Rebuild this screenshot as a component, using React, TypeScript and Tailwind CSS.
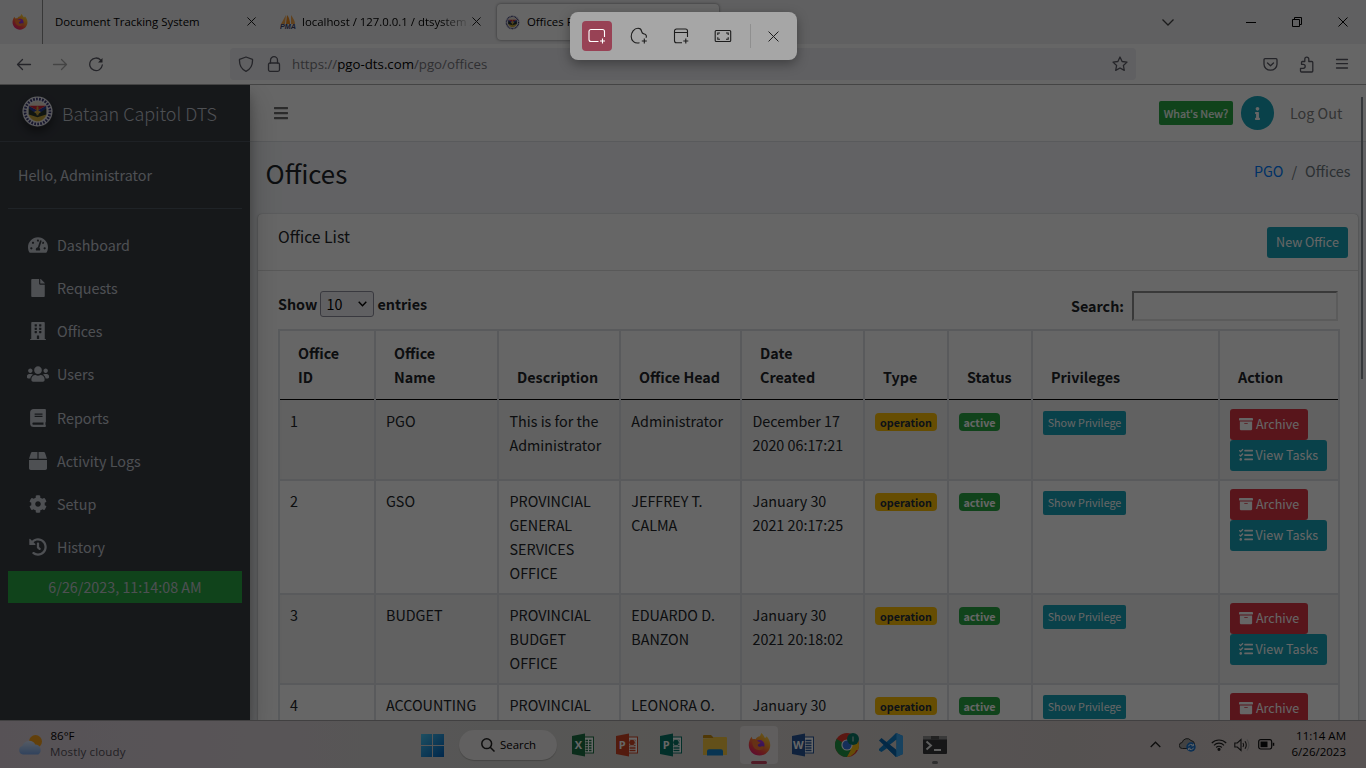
import type { ReactNode } from "react";
import {
  FaArchive, FaBars, FaBook, FaBox, FaBuilding, FaCog, FaFile, FaHistory,
  FaInfo, FaTachometerAlt, FaTasks, FaUsers,
} from "react-icons/fa";

function FirefoxLogo({ size, id }: { size: number; id: string }) {
  return (
    <svg width={size} height={size} viewBox="0 0 24 24" className="shrink-0">
      <defs>
        <linearGradient id={id + "a"} x1="0.85" y1="0" x2="0.2" y2="1">
          <stop offset="0" stopColor="#ffe545" />
          <stop offset="0.4" stopColor="#ff9a2b" />
          <stop offset="0.7" stopColor="#ff4545" />
          <stop offset="1" stopColor="#e8187f" />
        </linearGradient>
        <linearGradient id={id + "b"} x1="0.7" y1="0" x2="0.3" y2="1">
          <stop offset="0" stopColor="#b833e1" />
          <stop offset="1" stopColor="#5b3bd8" />
        </linearGradient>
      </defs>
      <path d="M12 23.500C5.500 23.500.8 18.500.8 12.500c0-3.500 1.300-6.500 3.200-8.500 0 1 .4 2 1 2.600 1-.4 2-.4 3-.1 1-2 2.500-3 4.300-3.200 .9-1 1-2 1.500-3.300 2 1.500 3 3.500 3.700 5 1.200 0 1.800-.8 1.800-1.600 2.300 2.400 3.900 5.600 3.900 9.100 0 6-4.700 11-11.200 11z" fill={`url(#${id}a)`} />
      <circle cx="12" cy="12.500" r="5.200" fill={`url(#${id}b)`} />
      <path d="M4.500 8.500c2-1.500 4.500-1.500 6 .3 1.200.4 2.300.3 2.600 1.200 0 1-1.800 1.400-2.600 2-.9 1.600 1 3 3 2.200 1.800-.6 2.800-.6 3.600.3-1.200 3-4.600 4.200-7.800 3-3.400-1.300-5.200-5-4.800-9z" fill="#ff7a35" />
    </svg>
  );
}

function Seal({ size }: { size: number }) {
  return (
    <svg width={size} height={size} viewBox="0 0 32 32" className="shrink-0">
      <circle cx="16" cy="16" r="15.500" fill="#e4e4ec" />
      <circle cx="16" cy="16" r="12.900" fill="none" stroke="#34346e" strokeWidth="2.700" strokeDasharray="1.800 1.300" />
      <circle cx="16" cy="16" r="10.500" fill="#e8dfd0" />
      <path d="M7 10l9 5-9 4z" fill="#2b3f9c" />
      <path d="M7 10h9v5z" fill="#d32436" />
      <path d="M25 10l-9 5v-5z" fill="#d32436" />
      <path d="M25 10v9l-9-4z" fill="#253d94" />
      <path d="M7 19l9-4 9 4c-1 4-5 7-9 7s-8-3-9-7z" fill="#c9a93d" />
      <path d="M7 13l9 6 9-6v6l-9 3-9-3z" fill="#27362c" />
      <path d="M15 11h2v9h-2z" fill="#c9a23d" />
    </svg>
  );
}

function PmaLogo() {
  return (
    <svg width="17" height="16" viewBox="0 0 17 16" className="shrink-0">
      <path d="M6 1L5 10H1z" fill="#f3a64b" />
      <path d="M7 1c2 2 3 6 3 9H6z" fill="#f08c1e" />
      <path d="M11 1c2 3 4 6 4 9h-4z" fill="#f3a64b" />
      <text x="0" y="15.300" fontSize="6.500" fontWeight="700" fontStyle="italic" fill="#3f4167" fontFamily="Liberation Sans, sans-serif" textLength="16" lengthAdjust="spacingAndGlyphs">PMA</text>
    </svg>
  );
}

function Cross({ size, color = "#1a1a1a", w = 1 }: { size: number; color?: string; w?: number }) {
  return (
    <svg width={size} height={size} viewBox="0 0 10 10" fill="none" stroke={color} strokeWidth={w} className="shrink-0">
      <path d="M.5.5l9 9M9.500.5l-9 9" />
    </svg>
  );
}

function TabStrip() {
  return (
    <div className="flex h-11 shrink-0 items-center bg-[#f0f0f2] font-['Open_Sans',sans-serif] text-[11.4px] text-black">
      <div className="flex h-full w-[43px] items-center border-r border-[#8d8d8d] pl-3">
        <FirefoxLogo size={16} id="tab" />
      </div>
      <div className="flex w-[222px] items-center pl-3">
        <span className="w-[192px] whitespace-nowrap">Document Tracking System</span>
        <Cross size={9} w={1.1} />
      </div>
      <div className="flex w-[232px] items-center pl-[15px]">
        <PmaLogo />
        <span className="ml-[5px] w-[170px] overflow-hidden whitespace-nowrap [mask-image:linear-gradient(to_right,black_82%,transparent)]">localhost / 127.0.0.1 / dtsystem /</span>
        <Cross size={9} w={1.1} />
      </div>
      <div className="flex h-9 w-[222px] items-center rounded bg-white pl-2 shadow-[0_0_3px_rgba(0,0,0,.5)]">
        <Seal size={15} />
        <span className="ml-[7px] whitespace-nowrap">Offices Page</span>
      </div>
      <div className="ml-auto flex items-center pr-[18px]">
        <svg width="12" height="7" viewBox="0 0 12 7" fill="none" stroke="#444" strokeWidth="1.300"><path d="M.5.5L6 6 11.500.5" /></svg>
        <div className="ml-[72px] h-px w-[10px] bg-black" />
        <svg width="10" height="10" viewBox="0 0 10 10" fill="none" stroke="#000" className="ml-9"><path d="M.5 2.500h7v7h-7zM2.500 2.500v-2h7v7h-2" /></svg>
        <div className="ml-9"><Cross size={10} color="#000" /></div>
      </div>
    </div>
  );
}

function Toolbar() {
  const s = { fill: "none", stroke: "#5b5b66", strokeWidth: 1.3, strokeLinecap: "round", strokeLinejoin: "round" } as const;
  return (
    <div className="flex h-[41px] shrink-0 items-center border-b border-[#aaa] bg-white pr-[17px] pl-4">
      <svg width="16" height="16" viewBox="0 0 16 16" {...s}><path d="M14.500 8.500H1.500M6.500 3.500l-5 5 5 5" /></svg>
      <svg width="16" height="16" viewBox="0 0 16 16" {...s} stroke="#aaa" className="ml-5"><path d="M1.500 8.500h13M9.500 3.500l5 5-5 5" /></svg>
      <svg width="16" height="16" viewBox="0 0 16 16" {...s} className="ml-5"><path d="M12.800 4.200A6.300 6.300 0 1 0 14.300 9" /><path d="M14.500 2v4.500H10z" fill="#4d4d55" stroke="none" /></svg>
      <div className="ml-[126px] flex h-8 w-[906px] items-center rounded bg-[#f0f0f4] pr-2 pl-2">
        <svg width="16" height="16" viewBox="0 0 16 16" {...s}><path d="M8 1l6.500 2.300c.3 5-1.500 9.700-6.500 12-5-2.300-6.800-7-6.500-12z" /></svg>
        <svg width="14" height="16" viewBox="0 0 14 16" {...s} className="ml-[13px]"><rect x="1.500" y="7" width="11" height="8.300" rx="1.500" /><path d="M3.500 7V4.200a3.500 3.500 0 0 1 7 0V7" /></svg>
        <span className="ml-[11px] pt-0.5 font-['Open_Sans',sans-serif] text-[13.250px] whitespace-nowrap text-[#77777d]">https://<span className="text-black">pgo-dts.com</span>/pgo/offices</span>
        <svg width="16" height="16" viewBox="0 0 16 16" {...s} className="ml-auto"><path d="M8 1l2.100 4.500 4.900.6-3.600 3.400.9 4.900L8 12l-4.300 2.400.9-4.900L1 6.100l4.900-.6z" /></svg>
      </div>
      <svg width="15" height="15" viewBox="0 0 15 15" {...s} className="ml-[126.500px]"><path d="M2 1.700h11a1 1 0 0 1 1 1v4.500a6.500 6 0 0 1-13 0V2.700a1 1 0 0 1 1-1zM4.500 6l3 2.800 3-2.800" /></svg>
      <svg width="16" height="17" viewBox="0 0 16 17" {...s} className="ml-[21px]"><path d="M2.500 16h10.300a1 1 0 0 0 1-1V6.500a1 1 0 0 0-1-1H9.800V3.200a2 2 0 0 0-4 0v2.300H3.500a1 1 0 0 0-1 1v1.800h1.700a2 2 0 0 1 0 4H1.500V15a1 1 0 0 0 1 1z" /></svg>
      <svg width="14" height="12" viewBox="0 0 14 12" {...s} className="ml-auto"><path d="M1.500 1.500h11M1.500 5.700h11M1.500 10h11" /></svg>
    </div>
  );
}

const navItems = [
  { label: "Dashboard", Icon: FaTachometerAlt, size: 20 },
  { label: "Requests", Icon: FaFile, size: 18 },
  { label: "Offices", Icon: FaBuilding, size: 18 },
  { label: "Users", Icon: FaUsers, size: 22 },
  { label: "Reports", Icon: FaBook, size: 18 },
  { label: "Activity Logs", Icon: FaBox, size: 18 },
  { label: "Setup", Icon: FaCog, size: 18 },
  { label: "History", Icon: FaHistory, size: 18 },
];

function Sidebar() {
  return (
    <aside className="z-10 flex w-[250px] shrink-0 flex-col bg-[#383c43] text-[#c2c7d0] shadow-[0_14px_28px_rgba(0,0,0,.25),0_10px_10px_rgba(0,0,0,.22)]">
      <div className="flex h-[57px] items-center border-b border-[#4b545c] pl-[22px]">
        <div className="-mt-1 rounded-full shadow-[0_5px_8px_rgba(0,0,0,.4)]"><Seal size={31} /></div>
        <span className="ml-[9px] pb-px text-[17.950px] leading-6 font-light whitespace-nowrap">Bataan Capitol DTS</span>
      </div>
      <div className="mx-2 h-[67px] border-b border-[#4f5962] pt-[21px] pl-[10px] text-[14.330px] leading-6">Hello, Administrator</div>
      <nav className="mt-[14.400px] mb-[2.600px] flex flex-col">
        {navItems.map(({ label, Icon, size }) => (
          <div key={label} className="flex h-[43.150px] items-center pl-6">
            <span className="flex w-7 justify-center"><Icon size={size} /></span>
            <span className="ml-[5px] text-[14.330px] leading-6">{label}</span>
          </div>
        ))}
      </nav>
      <div className="mx-2 h-8 bg-[#28a745] text-center text-[14.330px] leading-8">6/26/2023, 11:14:08 AM</div>
    </aside>
  );
}

const columns = ["Office ID", "Office Name", "Description", "Office Head", "Date Created", "Type", "Status", "Privileges", "Action"];
const offices = [
  { id: "1", name: "PGO", desc: "This is for the Administrator", head: "Administrator", date: ["December 17", "2020 06:17:21"], h: "h-[79px] pt-[9px] bg-[#f2f2f2]" },
  { id: "2", name: "GSO", desc: "PROVINCIAL GENERAL SERVICES OFFICE", head: "JEFFREY T. CALMA", date: ["January 30", "2021 20:17:25"], h: "h-[114px] border-t-2 pt-[8px]" },
  { id: "3", name: "BUDGET", desc: "PROVINCIAL BUDGET OFFICE", head: "EDUARDO D. BANZON", date: ["January 30", "2021 20:18:02"], h: "h-[90px] border-t-2 pt-[8px] bg-[#f2f2f2]" },
  { id: "4", name: "ACCOUNTING", desc: "PROVINCIAL", head: "LEONORA O.", date: ["January 30", ""], h: "h-[90px] border-t-2 pt-[8px]" },
];
const gridCols = "grid grid-cols-[96px_123px_122px_121px_123px_84px_84px_187px_120px]";

function Cell({ className, children }: { className: string; children: ReactNode }) {
  return <div className={"border-l-2 border-[#dee2e6] pl-[10px] " + className}>{children}</div>;
}

function OfficeTable() {
  return (
    <div className="w-[1062px] border-t-2 border-r-2 border-[#dee2e6] text-[14.330px] leading-6 text-[#212529]">
      <div className={gridCols + " h-[69px]"}>
        {columns.map((c, i) => (
          <div key={c} className="border-l-2 border-[#dee2e6]">
            <div className="flex h-full items-end border-b border-black pb-[10px] pl-[18px] font-bold">
              <span className={i < 2 || i === 4 ? "w-14" : "whitespace-nowrap"}>{c}</span>
            </div>
          </div>
        ))}
      </div>
      {offices.map((o) => (
        <div key={o.id} className={gridCols}>
          <Cell className={o.h}>{o.id}</Cell>
          <Cell className={o.h}>{o.name}</Cell>
          <Cell className={o.h}><div className="w-[100px] pl-[0.5px]">{o.desc}</div></Cell>
          <Cell className={o.h}><div className="w-[100px] pl-[0.300px]">{o.head}</div></Cell>
          <Cell className={o.h + " whitespace-nowrap"}><div className="pl-[0.5px]">{o.date[0]}<br />{o.date[1]}</div></Cell>
          <Cell className={o.h}>
            <div className="mt-1 h-[18px] w-[62px] rounded bg-[#ffc107] pt-px text-center text-[10.750px] leading-[18px] font-bold text-[#1f2d3d]">operation</div>
          </Cell>
          <Cell className={o.h}>
            <div className="mt-1 h-[18px] w-[41px] rounded bg-[#28a745] pt-px text-center text-[10.750px] leading-[18px] font-bold text-white">active</div>
          </Cell>
          <Cell className={o.h}>
            <div className="mt-0.5 h-6 w-[83px] rounded-[2px] bg-[#17a2b8] text-center text-[10.750px] leading-6 whitespace-nowrap text-white">Show Privilege</div>
          </Cell>
          <Cell className={o.h}>
            <div className="flex h-[31px] w-[78px] items-center gap-[3px] rounded-[3px] bg-[#dc3545] pb-0.5 pl-[9px] text-[12.540px] text-white"><FaArchive size={14} />Archive</div>
            <div className="flex h-[31px] w-[97px] items-center gap-[2.500px] rounded-[3px] bg-[#17a2b8] pb-0.5 pl-[9px] text-[12.540px] whitespace-nowrap text-white"><FaTasks size={14} />View Tasks</div>
          </Cell>
        </div>
      ))}
    </div>
  );
}

function Main() {
  return (
    <main className="relative flex grow flex-col overflow-hidden bg-[#f4f6f9] text-[14.330px] leading-6 text-[#212529]">
      <header className="flex h-[57px] shrink-0 items-center border-b border-[#dee2e6] bg-white pr-6 pl-[23px]">
        <FaBars size={16} color="#6c6c6c" />
        <div className="ml-auto h-6 w-[74px] rounded-[2px] bg-[#28a745] text-center text-[10.900px] leading-[25px] whitespace-nowrap text-white [-webkit-text-stroke:0.2px_white]">What's New?</div>
        <div className="ml-2 flex h-[34px] w-[33px] items-center justify-center rounded-full bg-[#17a2b8] text-white"><FaInfo size={13} /></div>
        <span className="ml-4 w-[52px] pb-px whitespace-nowrap text-[#7f7f7f]">Log Out</span>
      </header>
      <div className="flex h-[72px] shrink-0 justify-between pr-[15.500px] pl-[15.500px]">
        <h1 className="pt-[13px] text-[25.800px] leading-9">Offices</h1>
        <div className="flex gap-2 pt-[17px]"><span className="text-[#007bff]">PGO</span><span className="text-[#6c757d]">/</span><span className="text-[#6c757d]">Offices</span></div>
      </div>
      <section className="mx-2 flex grow flex-col rounded-t bg-white shadow-[0_0_1px_rgba(0,0,0,.3),0_1px_3px_rgba(0,0,0,.25)]">
        <div className="flex h-[57px] shrink-0 justify-between border-b border-[#dedede] pt-[13px] pr-[10px] pl-5">
          <h3 className="-mt-0.5 text-[15.760px]">Office List</h3>
          <button className="h-[31px] w-[81px] rounded-[3px] bg-[#17a2b8] pb-0.5 text-[12.540px] whitespace-nowrap text-white">New Office</button>
        </div>
        <div className="flex h-[58px] shrink-0 justify-between pt-5 pr-5 pl-5 font-bold">
          <div className="flex h-[26px] items-center gap-1">
            <span className="w-[38px] pb-px">Show</span>
            <span className="flex h-[26px] w-[54px] items-center justify-between rounded-[3px] border border-[#8f8f9d] bg-[#f0f0f4] pr-[6px] pl-[5.500px] text-black"><span className="font-normal">10</span>
              <svg width="9" height="6" viewBox="0 0 9 6" fill="none" stroke="#000" strokeWidth="1.400"><path d="M.7.7l3.800 4 3.800-4" /></svg>
            </span>
            <span className="-ml-[0.500px] pb-px">entries</span>
          </div>
          <div className="flex h-[30px] items-center gap-2">
            <span>Search:</span>
            <span className="h-[30px] w-[206px] border-2 border-[#e3e3e3] border-t-[#8f8f8f] border-l-[#8f8f8f] bg-white" />
          </div>
        </div>
        <div className="pl-5"><OfficeTable /></div>
      </section>
      <div className="absolute top-3 right-[3px] h-[282px] w-[2px] bg-[#858c94]" />
    </main>
  );
}

function OfficeApp({ letter, color, shift }: { letter: string; color: string; shift: string }) {
  return (
    <svg width="24" height="24" viewBox="0 0 24 24" className={"shrink-0 " + shift}>
      <rect x="11" y="4" width="11.500" height="16" fill="#fff" stroke={color} />
      <path d="M14.500 7.500h6M14.500 10h6M14.500 12.500h6M14.500 15h6M14.500 17.500h6" stroke={color} strokeWidth="1.300" />
      {letter === "X" && <path d="M17.500 6v13" stroke="#fff" />}
      {letter === "P" && <circle cx="17" cy="9.500" r="3.300" fill={color} stroke="#fff" strokeWidth=".8" />}
      <path d="M1 3l13-2.500v23L1 21z" fill={color} />
      <text x="7.300" y="16" fontSize="11" fontWeight="700" textAnchor="middle" fill="#fff" fontFamily="Open Sans, sans-serif">{letter}</text>
    </svg>
  );
}

function Taskbar() {
  return (
    <footer className="flex h-12 shrink-0 items-center border-t border-[#a4a0a2] bg-[linear-gradient(90deg,#d9ced8_0%,#dcd4da_18%,#d8d8d5_36%,#dad4d1_56%,#d5cdcb_78%,#dcd0cf_100%)] font-['Open_Sans',sans-serif] text-[11.500px] text-black">
      <div className="flex w-[420px] items-center pl-[18px]">
        <svg width="26" height="24" viewBox="0 0 26 24">
          <defs><linearGradient id="cl" x1="0" y1="0" x2="0" y2="1"><stop offset="0" stopColor="#d4e4fa" /><stop offset="1" stopColor="#7ba7e8" /></linearGradient></defs>
          <circle cx="17.500" cy="8.500" r="6.500" fill="#f5a01d" />
          <path d="M5 21.500a4.500 4.500 0 0 1-.5-8.800 7 7 0 0 1 12.800-1.200 5.500 5.500 0 0 1 3 10z" fill="url(#cl)" />
        </svg>
        <div className="ml-[6px] pb-0.5 leading-4"><div className="pl-[0.500px]">86°F</div><div className="tracking-[.15px] whitespace-nowrap text-[#55505a]">Mostly cloudy</div></div>
      </div>
      <svg width="24" height="24" viewBox="0 0 24 24">
        <defs><linearGradient id="wn" x1="0" y1="0" x2="1" y2="1"><stop offset="0" stopColor="#4cc7f4" /><stop offset="1" stopColor="#0062bd" /></linearGradient></defs>
        <path d="M1 1h11v11H1zM13 1h11v11H13zM1 13h11v11H1zM13 13h11v11H13z" fill="url(#wn)" />
      </svg>
      <div className="ml-[15px] flex h-[30px] w-[98px] items-center rounded-full bg-[#f2efef] pl-[22px] shadow-[0_1px_1px_rgba(0,0,0,.2)]">
        <svg width="14" height="14" viewBox="0 0 14 14" fill="none" stroke="#222" strokeWidth="1.500"><circle cx="5.700" cy="5.700" r="4.900" /><path d="M9.200 9.200l4.300 4.300" /></svg>
        <span className="ml-[5px] text-[11.400px]">Search</span>
      </div>
      <OfficeApp letter="X" color="#1d7044" shift="ml-[14px]" />
      <OfficeApp letter="P" color="#d04423" shift="ml-5" />
      <OfficeApp letter="P" color="#077568" shift="ml-5" />
      <svg width="24" height="24" viewBox="0 0 24 24" className="ml-5"><path d="M0 3a1 1 0 0 1 1-1h7l3 3H0z" fill="#c98d10" /><path d="M0 5.500l10-.5 1-1h12a1 1 0 0 1 1 1v17H0z" fill="#f7c843" /><path d="M4 22.500v-4.300a2 2 0 0 1 2-2h12a2 2 0 0 1 2 2v4.300z" fill="#1583cc" /></svg>
      <div className="relative ml-[13px] flex h-[38px] w-[38px] items-center justify-center rounded bg-[#efeaea]">
        <FirefoxLogo size={23} id="task" />
        <div className="absolute bottom-0 h-[3px] w-4 rounded-full bg-[#c94762]" />
      </div>
      <OfficeApp letter="W" color="#2a5699" shift="ml-[13px]" />
      <svg width="24" height="24" viewBox="0 0 24 24" className="ml-5">
        <circle cx="12" cy="12" r="12" fill="#e33b2e" />
        <path d="M12 12L1.600 6A12 12 0 0 0 12 24l5.200-9z" fill="#229a48" />
        <path d="M12 12h10.500A12 12 0 0 1 12 24l5-9z" fill="#fbc116" />
        <path d="M12 6.500h10.500A12 12 0 0 1 24 12a12 12 0 0 1-1 5H14z" fill="#fbc116" />
        <circle cx="12" cy="12" r="5.600" fill="#fff" /><circle cx="12" cy="12" r="4.500" fill="#3576e0" />
        <circle cx="18" cy="6" r="6" fill="#087b68" /><path d="M18 3.500v5" stroke="#d5ddd9" />
      </svg>
      <svg width="24" height="24" viewBox="0 0 24 24" className="ml-5"><path d="M17 0l7 3v18l-7 3-9-8.800L2.500 19 0 17.500v-1.500L13 4zM17.500 6.500L10.500 12l7 5.500z" fill="#1080ca" fillRule="evenodd" /><path d="M0 7.500L2.500 5 17 16.500V24z" fill="#0968ae" /><path d="M17.500 0L24 3v18l-6.500 3z" fill="#3aa5ee" /></svg>
      <div className="relative ml-5 flex h-[38px] items-center">
        <svg width="24" height="18" viewBox="0 0 24 18"><rect width="24" height="18" rx="1" fill="#37383a" /><path d="M0 0h24v3.500H0z" fill="#8e8e8e" /><path d="M8 0h8v3.500H8z" fill="#555" /><path d="M3.500 5.500l4.500 4-4.500 4M11 14h7" fill="none" stroke="#eee" strokeWidth="1.900" /></svg>
        <div className="absolute bottom-0 left-[9px] h-[3px] w-[6px] rounded-full bg-[#777]" />
      </div>
      <div className="ml-auto flex items-center pr-5">
        <svg width="11" height="7" viewBox="0 0 11 7" fill="none" stroke="#222" strokeWidth="1.300"><path d="M.7 6L5.500 1.200 10.300 6" /></svg>
        <svg width="17" height="15" viewBox="0 0 17 15" className="ml-[18px]"><path d="M3.500 11.500a3 3 0 0 1-.3-6A5 5 0 0 1 12 3.500a4 4 0 0 1 3.500 4v4z" fill="#a5a5a5" stroke="#333" /><circle cx="12" cy="10" r="4.700" fill="#1c75cf" /><path d="M9.500 9.300a2.600 2.600 0 0 1 4.800-.6M14.500 10.700a2.600 2.600 0 0 1-4.800.6M14.400 6.800v2h-2M9.600 13.200v-2h2" fill="none" stroke="#fff" strokeWidth=".9" /></svg>
        <svg width="16" height="13" viewBox="0 0 16 13" fill="none" stroke="#222" strokeWidth="1.200" className="ml-[15px]"><path d="M.8 5a10.200 10.200 0 0 1 14.400 0M3 7.300a7 7 0 0 1 10 0M5.200 9.500a4 4 0 0 1 5.600 0" /><circle cx="8" cy="11.300" r="1" fill="#222" /></svg>
        <svg width="16" height="14" viewBox="0 0 16 14" fill="none" stroke="#222" strokeWidth="1.100" className="ml-[7px]"><path d="M.8 5h2.500L7 1.500v11L3.300 9H.8zM9 5c.8 1.300.8 2.700 0 4M11 3.200c1.700 2.500 1.700 5.100 0 7.600" /><path d="M13 1.500c2.500 3.500 2.500 7.500 0 11" stroke="#aaa" /></svg>
        <svg width="17" height="11" viewBox="0 0 17 11" className="ml-2"><rect x=".7" y=".7" width="13" height="9.300" rx="2" fill="none" stroke="#111" strokeWidth="1.200" /><path d="M2.500 2.500h7v5.700h-7z" fill="#111" /><path d="M15.500 3.800v3" stroke="#111" strokeWidth="1.500" /></svg>
        <div className="ml-[14px] w-[57px] pb-0.5 text-right leading-4 whitespace-nowrap"><div>11:14 AM</div><div>6/26/2023</div></div>
      </div>
    </footer>
  );
}

function CaptureBar() {
  const s = { width: 18, height: 18, viewBox: "0 0 18 18", fill: "none", stroke: "#1c1c1c", strokeWidth: 1.1 };
  return (
    <div className="absolute top-3 left-[570px] flex h-12 w-[227px] items-center rounded-lg bg-[#a6a6a6] pl-3 shadow-[0_4px_12px_rgba(0,0,0,.35)]">
      <div className="flex h-[30px] w-[30px] items-center justify-center rounded bg-[#984255]">
        <svg {...s} stroke="#fff"><path d="M10.500 14.500H3a2 2 0 0 1-2-2v-8a2 2 0 0 1 2-2h11.500a2 2 0 0 1 2 2V10M14.500 11.500v5M12 14h5" /></svg>
      </div>
      <svg {...s} className="ml-[18px]"><path d="M9.500 15.800C4.500 17 1.200 13.500 1.200 9.500S4 1.300 8 1.300c2.500 0 3.300 1 3.600 3 .3 2.200 1.200 2.200 3 2.800 1.600.6 2.300 2 1.400 3.600M14.300 11.500v5M11.800 14h5" /></svg>
      <svg {...s} className="ml-6"><path d="M10 15.800H4.500a2 2 0 0 1-2-2V4a2 2 0 0 1 2-2h9a2 2 0 0 1 2 2v6M2.500 5.500h13M13.800 11.500v5M11.300 14h5" /></svg>
      <svg {...s} className="ml-6"><rect x="1.200" y="3.500" width="15.500" height="11" rx="1" /><path d="M3.800 8V6h2.200M12 6h2.200v2M14.200 10.300v2H12M6 12.300H3.800v-2" /></svg>
      <div className="ml-[18px] h-6 w-px bg-[#8f8f8f]" />
      <div className="ml-[17px]"><Cross size={11} w={0.9} /></div>
    </div>
  );
}

export default function App() {
  return (
    <div className="relative flex h-screen w-full flex-col overflow-hidden font-['Noto_Sans_CJK_JP',sans-serif]">
      <TabStrip />
      <Toolbar />
      <div className="flex min-h-0 grow overflow-hidden">
        <Sidebar />
        <Main />
      </div>
      <Taskbar />
      <div className="absolute inset-0 z-20 bg-black/60" />
      <div className="absolute inset-x-0 top-0 z-30 h-0"><CaptureBar /></div>
    </div>
  );
}
